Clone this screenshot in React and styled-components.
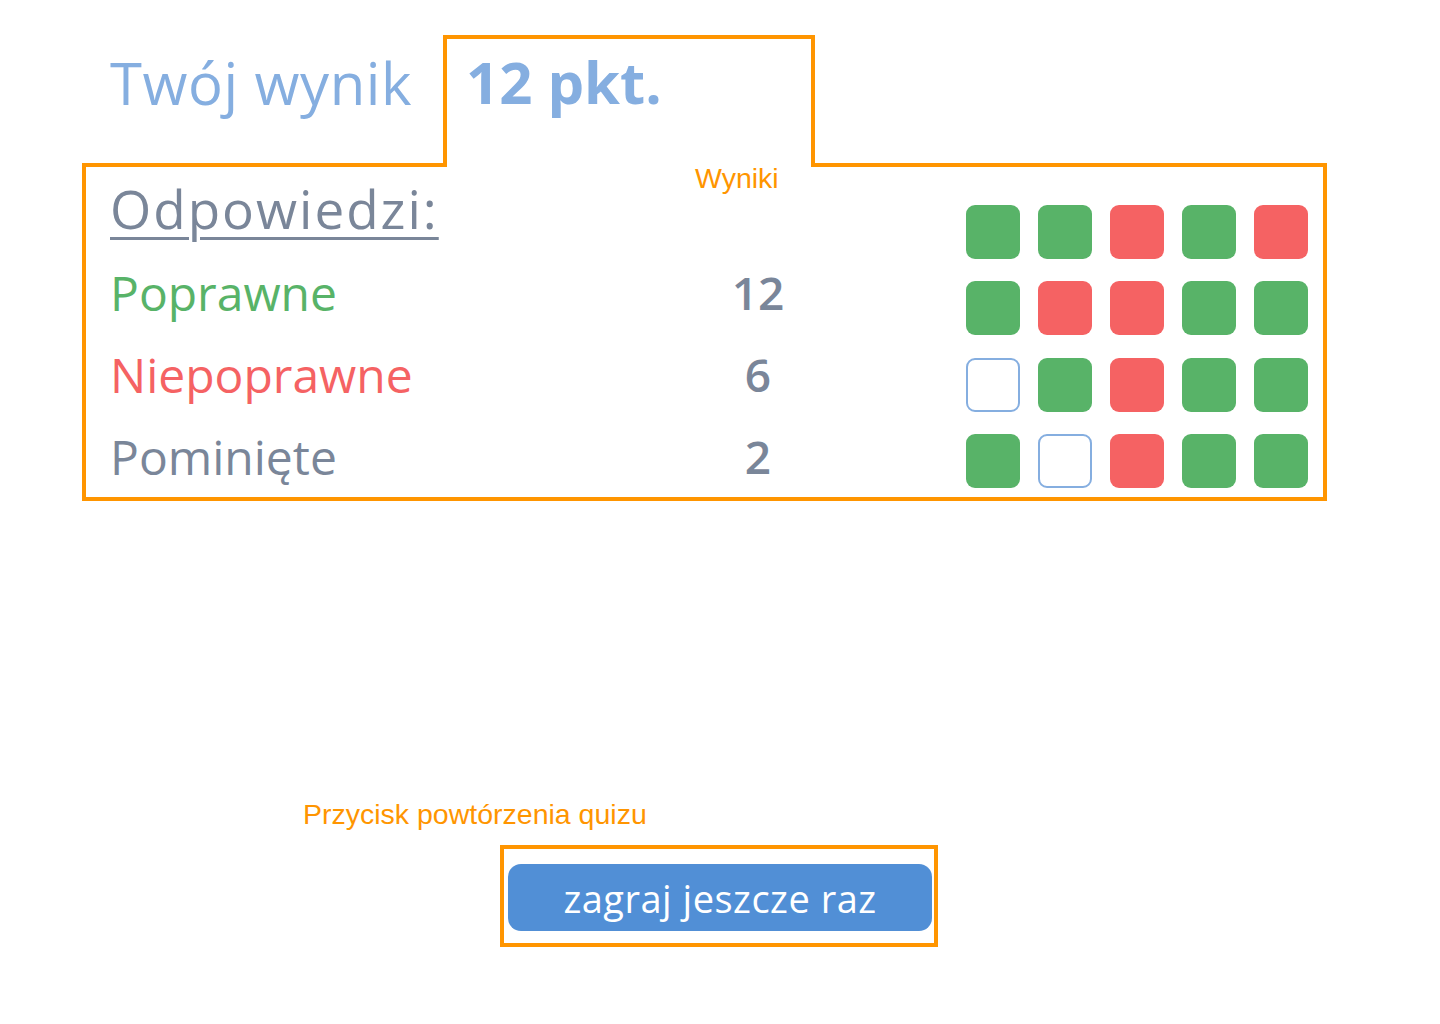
import styled, { createGlobalStyle } from 'styled-components';

const GlobalStyle = createGlobalStyle`
  body {
    margin: 0;
    background: #ffffff;
    font-family: "Open Sans", "Noto Sans", sans-serif;
  }
`;

const ORANGE = '#ff9500';
const BLUE = '#85aee0';
const SLATE = '#7a8699';

const Page = styled.div`
  width: 1440px;
  height: 1024px;
  padding-top: 35px;
  box-sizing: border-box;
`;

const ResultCard = styled.section`
  width: 1245px;
  margin-left: 82px;
`;

const Header = styled.div`
  display: flex;
  align-items: flex-start;
`;

const ScoreLabel = styled.div`
  width: 361px;
  padding: 10px 0 0 28px;
  box-sizing: border-box;
  font-size: 58px;
  font-weight: 400;
  letter-spacing: 0.6px;
  line-height: 76px;
  color: ${BLUE};
`;

const ScoreTab = styled.div`
  position: relative;
  z-index: 1;
  width: 372px;
  height: 132px;
  margin-bottom: -4px;
  padding: 5px 0 0 19px;
  box-sizing: border-box;
  background: #ffffff;
  border: 4px solid ${ORANGE};
  border-bottom: none;
  font-size: 58px;
  font-weight: 700;
  line-height: 76px;
  color: ${BLUE};
`;

const Panel = styled.div`
  position: relative;
  display: flex;
  justify-content: space-between;
  height: 338px;
  padding: 0 15px 9px 24px;
  box-sizing: border-box;
  border: 4px solid ${ORANGE};
`;

const Note = styled.span`
  font-family: "Liberation Sans", Arial, sans-serif;
  font-size: 28.5px;
  color: ${ORANGE};
`;

const PanelNote = styled(Note)`
  position: absolute;
  top: -5px;
  left: 609px;
`;

const Stats = styled.div`
  display: grid;
  grid-template-columns: 598px 100px;
  grid-auto-rows: 82px;
  padding-top: 2px;
  align-items: center;
`;

const Heading = styled.div`
  font-size: 53px;
  font-weight: 500;
  letter-spacing: 2px;
  color: ${SLATE};
  text-decoration: underline;
  text-decoration-thickness: 3px;
  text-underline-offset: 8px;
  margin-top: -4px;
`;

const StatName = styled.div`
  font-size: 48px;
  font-weight: 400;
  color: ${(p) => p.$color};
`;

const StatValue = styled.div`
  font-size: 46px;
  font-weight: 600;
  color: ${SLATE};
  text-align: center;
`;

const Board = styled.div`
  display: grid;
  grid-template-columns: repeat(5, 54px);
  grid-auto-rows: 54px;
  column-gap: 18px;
  row-gap: 22.5px;
  align-self: flex-end;
`;

const Cell = styled.div`
  border-radius: 9px;
  box-sizing: border-box;
  background: ${(p) =>
    p.$state === 'ok' ? '#58b368' : p.$state === 'bad' ? '#f56263' : '#ffffff'};
  border: ${(p) => (p.$state === 'skip' ? `2px solid ${BLUE}` : 'none')};
`;

const Footer = styled.div`
  display: flex;
  flex-direction: column;
  align-items: flex-start;
  margin: 297px 0 0 303px;
`;

const ButtonFrame = styled.div`
  margin: 14px 0 0 197px;
  padding: 15px 2px 12px 4px;
  border: 4px solid ${ORANGE};
`;

const ReplayButton = styled.button`
  display: block;
  width: 424px;
  height: 67px;
  border: none;
  border-radius: 13px;
  background: #518fd6;
  color: #ffffff;
  font-family: "Open Sans", "Noto Sans", sans-serif;
  font-size: 38px;
  font-weight: 400;
  letter-spacing: 0.5px;
  cursor: pointer;
`;

const stats = [
  { name: 'Poprawne', value: 12, color: '#58b368' },
  { name: 'Niepoprawne', value: 6, color: '#f56263' },
  { name: 'Pominięte', value: 2, color: SLATE },
];

const answers = [
  'ok', 'ok', 'bad', 'ok', 'bad',
  'ok', 'bad', 'bad', 'ok', 'ok',
  'skip', 'ok', 'bad', 'ok', 'ok',
  'ok', 'skip', 'bad', 'ok', 'ok',
];

const App = () => {
  return (
    <Page>
      <GlobalStyle />
      <ResultCard>
        <Header>
          <ScoreLabel>Twój wynik</ScoreLabel>
          <ScoreTab>12 pkt.</ScoreTab>
        </Header>
        <Panel>
          <PanelNote>Wyniki</PanelNote>
          <Stats>
            <Heading>Odpowiedzi:</Heading>
            <div />
            {stats.map((s) => [
              <StatName key={s.name} $color={s.color}>{s.name}</StatName>,
              <StatValue key={s.name + '-v'}>{s.value}</StatValue>,
            ])}
          </Stats>
          <Board>
            {answers.map((a, i) => (
              <Cell key={i} $state={a} />
            ))}
          </Board>
        </Panel>
      </ResultCard>
      <Footer>
        <Note>Przycisk powtórzenia quizu</Note>
        <ButtonFrame>
          <ReplayButton>zagraj jeszcze raz</ReplayButton>
        </ButtonFrame>
      </Footer>
    </Page>
  );
};

export default App;
